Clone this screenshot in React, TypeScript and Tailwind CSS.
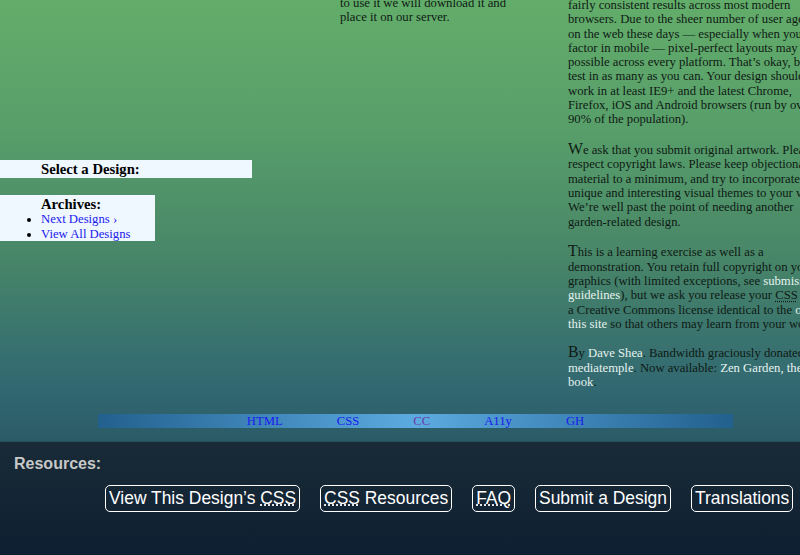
const serif = "font-['Liberation_Serif','Times_New_Roman',serif]"
const sans = "font-['Liberation_Sans',Arial,sans-serif]"

const para1 = [
  "fairly consistent results across most modern",
  "browsers. Due to the sheer number of user agents",
  "on the web these days — especially when you",
  "factor in mobile — pixel-perfect layouts may not be",
  "possible across every platform. That’s okay, but do",
  "test in as many as you can. Your design should",
  "work in at least IE9+ and the latest Chrome,",
  "Firefox, iOS and Android browsers (run by over",
  "90% of the population).",
]

const para2 = [
  "e ask that you submit original artwork. Please",
  "respect copyright laws. Please keep objectionable",
  "material to a minimum, and try to incorporate",
  "unique and interesting visual themes to your work.",
  "We’re well past the point of needing another",
  "garden-related design.",
]

const navLinks = [
  { label: "HTML", visited: false },
  { label: "CSS", visited: false },
  { label: "CC", visited: true },
  { label: "A11y", visited: false },
  { label: "GH", visited: false },
]

const Lite = ({ children }: { children: React.ReactNode }) => (
  <a className="text-[#e6f2ee]">{children}</a>
)

const Big = ({ children }: { children: React.ReactNode }) => (
  <span className="text-[15.8px] leading-none">{children}</span>
)

function Lines({ lines, first }: { lines: string[]; first?: string }) {
  return (
    <p className="mb-[14.5px]">
      {lines.map((l, i) => (
        <span key={i} className="block whitespace-nowrap">
          {i === 0 && first && <Big>{first}</Big>}
          {l}
        </span>
      ))}
    </p>
  )
}

const btn = "shrink-0 whitespace-nowrap border border-white rounded-[5px] px-[3px] py-[2px]"

export default function App() {
  return (
    <div className={`w-[800px] h-[555px] overflow-hidden ${serif}`}>
      {/* green garden area */}
      <div className="h-[441px] bg-[linear-gradient(180deg,#63ad6a_0%,#579e6a_30%,#488668_58%,#316872_88%,#2b5b66_100%)] text-[#0f1a14] text-[12.7px]">
        <div className="flex h-[414px]">
          {/* sidebar */}
          <div className="w-[340px] shrink-0 pt-[160px]">
            <div className="w-[252px] h-[18px] bg-[#f0f8ff] pl-[41px] text-[14.7px] leading-[18px] font-bold text-black">
              Select a Design:
            </div>
            <div className="mt-[17px] w-[155px] h-[46px] bg-[#f0f8ff] pl-[41px] text-black">
              <h3 className="text-[14.7px] leading-[16px] font-bold pt-px">Archives:</h3>
              <ul className="list-disc leading-[14.5px]">
                <li><a className="text-[#2020ee]">Next Designs ›</a></li>
                <li><a className="text-[#2020ee]">View All Designs</a></li>
              </ul>
            </div>
          </div>

          {/* middle column */}
          <div className="w-[228px] shrink-0 -mt-[4px] leading-[14px]">
            <p className="whitespace-nowrap">to use it we will download it and</p>
            <p className="whitespace-nowrap">place it on our server.</p>
          </div>

          {/* right column */}
          <div className="w-[270px] shrink-0 -mt-[2px] leading-[14.3px]">
            <Lines lines={para1} />
            <Lines lines={para2} first="W" />
            <p className="mb-[13px]">
              <span className="block whitespace-nowrap"><Big>T</Big>his is a learning exercise as well as a</span>
              <span className="block whitespace-nowrap">demonstration. You retain full copyright on your</span>
              <span className="block whitespace-nowrap">graphics (with limited exceptions, see <Lite>submission</Lite></span>
              <span className="block whitespace-nowrap"><Lite>guidelines</Lite>), but we ask you release your <abbr className="underline decoration-dotted underline-offset-2">CSS</abbr> under</span>
              <span className="block whitespace-nowrap">a Creative Commons license identical to the <Lite>one on</Lite></span>
              <span className="block whitespace-nowrap"><Lite>this site</Lite> so that others may learn from your work.</span>
            </p>
            <p>
              <span className="block whitespace-nowrap"><Big>B</Big>y <Lite>Dave Shea</Lite>. Bandwidth graciously donated by</span>
              <span className="block whitespace-nowrap"><Lite>mediatemple</Lite>. Now available: <Lite>Zen Garden, the</Lite></span>
              <span className="block whitespace-nowrap"><Lite>book</Lite>.</span>
            </p>
          </div>
        </div>

        {/* footer nav bar */}
        <nav className="ml-[98px] w-[635px] h-[14px] flex justify-center gap-[54px] bg-[linear-gradient(90deg,#22608e_0%,#4a94c8_35%,#5cabe0_50%,#4a94c8_65%,#22608e_100%)] leading-[14px]">
          {navLinks.map((l) => (
            <a key={l.label} className={l.visited ? "text-[#6a3aa8]" : "text-[#1a1aee]"}>
              {l.label}
            </a>
          ))}
        </nav>
      </div>

      {/* resources */}
      <div className={`h-[114px] border-t border-[#24505c] bg-[linear-gradient(180deg,#192b37_0%,#0f1f32_100%)] ${sans}`}>
        <h3 className="pl-[14px] pt-[13px] text-[16px] leading-[18px] font-bold text-[#c8c8c8]">Resources:</h3>
        <div className="flex gap-[20px] pl-[105px] mt-[12px] text-[17.45px] leading-[21px] text-white">
          <a className={btn}>
            View This Design’s <abbr className="underline decoration-dotted">CSS</abbr>
          </a>
          <a className={btn}>
            <abbr className="underline decoration-dotted">CSS</abbr> Resources
          </a>
          <a className={btn}>
            <abbr className="underline decoration-dotted">FAQ</abbr>
          </a>
          <a className={btn}>Submit a Design</a>
          <a className={btn}>Translations</a>
        </div>
      </div>
    </div>
  )
}
